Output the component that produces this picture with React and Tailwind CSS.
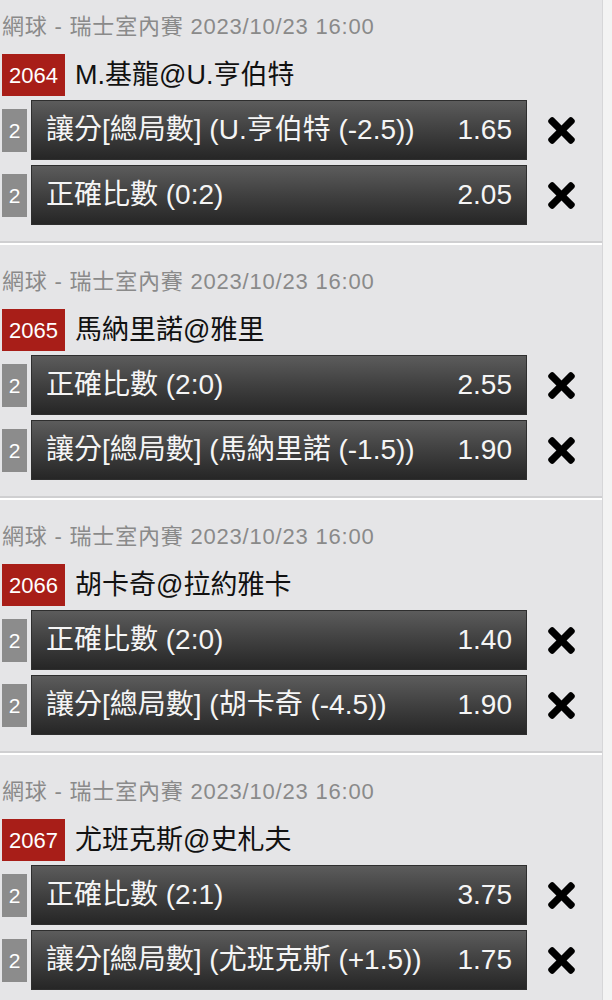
import React from "react";
import { FaTimes } from "react-icons/fa";

const matches = [
  {
    no: "2064",
    name: "M.基龍@U.亨伯特",
    bets: [
      { label: "讓分[總局數] (U.亨伯特 (-2.5))", odds: "1.65" },
      { label: "正確比數 (0:2)", odds: "2.05" },
    ],
  },
  {
    no: "2065",
    name: "馬納里諾@雅里",
    bets: [
      { label: "正確比數 (2:0)", odds: "2.55" },
      { label: "讓分[總局數] (馬納里諾 (-1.5))", odds: "1.90" },
    ],
  },
  {
    no: "2066",
    name: "胡卡奇@拉約雅卡",
    bets: [
      { label: "正確比數 (2:0)", odds: "1.40" },
      { label: "讓分[總局數] (胡卡奇 (-4.5))", odds: "1.90" },
    ],
  },
  {
    no: "2067",
    name: "尤班克斯@史札夫",
    bets: [
      { label: "正確比數 (2:1)", odds: "3.75" },
      { label: "讓分[總局數] (尤班克斯 (+1.5))", odds: "1.75" },
    ],
  },
];

function BetRow({ bet }) {
  return (
    <div className="flex items-center pl-[2px]">
      <div className="w-[25px] h-[43px] bg-[#8c8c8c] flex items-center justify-center">
        <span className="text-[21px] leading-none text-white">2</span>
      </div>
      <div className="ml-[4px] w-[496px] h-[60px] flex items-center justify-between px-[14px] bg-gradient-to-b from-[#5c5c5c] to-[#262626] border border-[#2e2e2e] text-[#f5f5f5] text-[28px] leading-none">
        <span>{bet.label}</span>
        <span>{bet.odds}</span>
      </div>
      <div className="ml-[15px] flex items-center text-black">
        <FaTimes size={39} />
      </div>
    </div>
  );
}

function Match({ match, first }) {
  return (
    <div>
      <div className={first ? "pt-[14px] pb-[16px]" : "pt-[24px] pb-[16px]"}>
        <div className="h-[26px] leading-[26px] text-[22px] tracking-[0.8px] text-[#8a8a8a] pl-[2px] whitespace-nowrap">
          網球 - 瑞士室內賽 2023/10/23 16:00
        </div>
        <div className="mt-[14px] flex items-center pl-[2px] h-[42px]">
          <div className="w-[63px] h-[42px] bg-[#a81e18] text-white text-[22px] flex items-center justify-center">
            {match.no}
          </div>
          <div className="ml-[10px] text-[27px] text-[#111]">{match.name}</div>
        </div>
        <div className="mt-[4px] flex flex-col gap-[5px]">
          {match.bets.map((b, i) => (
            <BetRow key={i} bet={b} />
          ))}
        </div>
      </div>
      <div className="h-[2px] bg-[#cfcfd1]"></div>
      <div className="h-[2px] bg-white"></div>
    </div>
  );
}

export default function App() {
  return (
    <div
      className="min-h-screen w-[612px] bg-[#f3f3f3] overflow-hidden"
      style={{ fontFamily: '"Liberation Sans", "Noto Sans CJK TC", sans-serif' }}
    >
      <div className="w-[603px] min-h-screen bg-[#e5e5e7] border-r border-[#d6d6d8]">
        {matches.map((m, i) => (
          <Match key={m.no} match={m} first={i === 0} />
        ))}
      </div>
    </div>
  );
}
